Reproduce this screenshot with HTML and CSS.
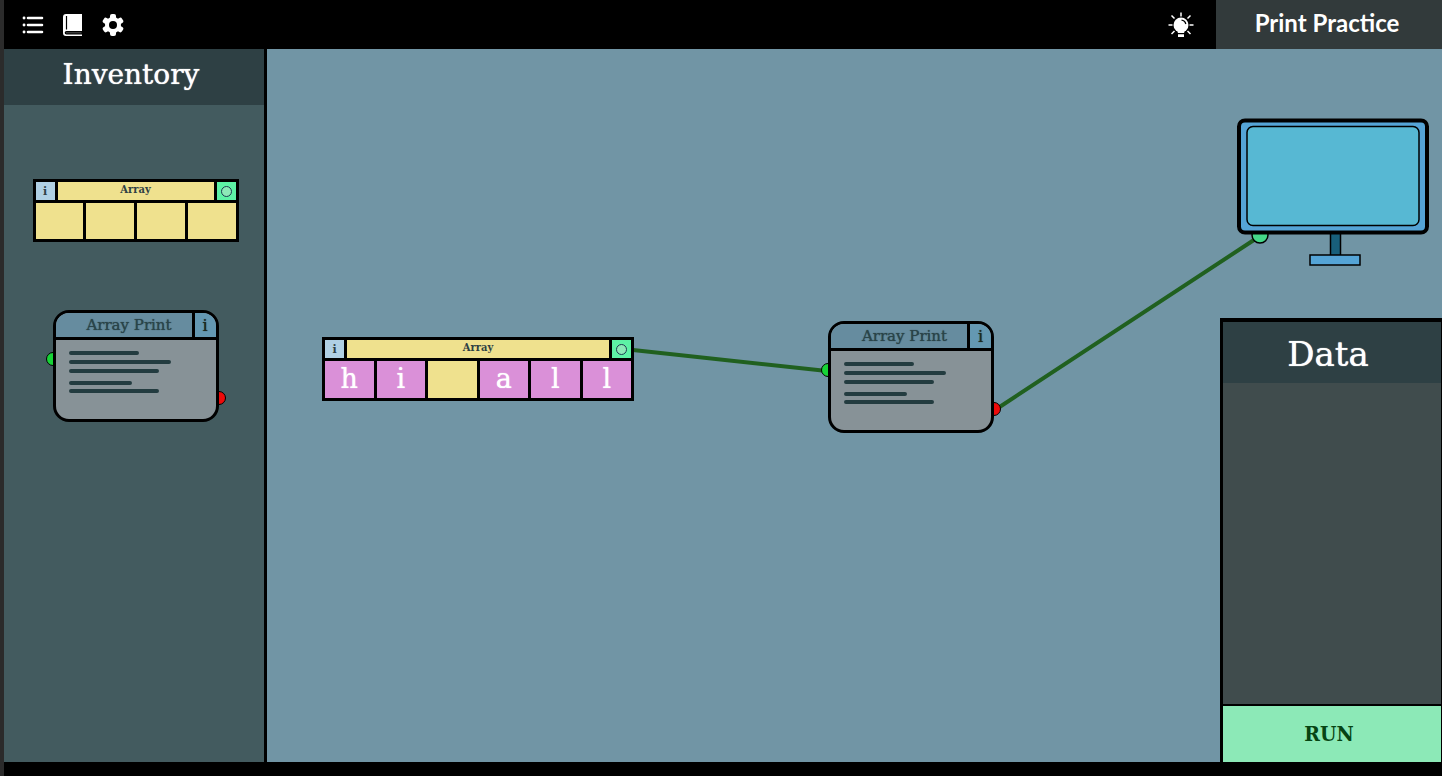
FILE: index.html
```html
<!DOCTYPE html>
<html lang="en">
<head>
<meta charset="utf-8">
<title>Print Practice</title>
<link rel="stylesheet" href="styles.css">
</head>
<body>
<div class="app">
  <header class="topbar">
    <nav class="tools">
      <button class="tool" aria-label="Levels">
        <svg width="22" height="20" viewBox="0 0 22 20" fill="none" stroke="#fff" stroke-width="3" stroke-linecap="round"><path d="M6 3H20M6 10H20M6 17H20" stroke-width="2.6"/><path d="M2 3h.1M2 10h.1M2 17h.1" stroke-width="2.8"/></svg>
      </button>
      <button class="tool" aria-label="Manual">
        <svg width="20" height="22" viewBox="0 0 20 22"><path d="M3 0H19V17H3.500a1.700 1.700 0 0 0 0 3.600H19V22H3A3 3 0 0 1 0 19V3A3 3 0 0 1 3 0Z" fill="#fff"/><path d="M3.500 2V15.500" stroke="#000" stroke-width="1.200"/><path d="M3 18.800H18.500" stroke="#555" stroke-width="1"/></svg>
      </button>
      <button class="tool" aria-label="Settings">
        <svg width="22" height="22" viewBox="0 0 22 22"><g fill="#fff"><circle cx="11" cy="11" r="8"/><g id="teeth"><rect x="8" y="0" width="6" height="22" rx="2"/><rect x="8" y="0" width="6" height="22" rx="2" transform="rotate(60 11 11)"/><rect x="8" y="0" width="6" height="22" rx="2" transform="rotate(120 11 11)"/></g></g><circle cx="11" cy="11" r="4" fill="#000"/></svg>
      </button>
    </nav>
    <button class="tool hint" aria-label="Hint">
      <svg width="26" height="26" viewBox="0 0 26 26"><g stroke="#fff" stroke-width="1.500"><path d="M13 0.500V4.500M3.500 3.500L6.500 6.500M22.500 3.500L19.500 6.500M0.500 13H4.500M21.500 13H25.500M3.500 22L6.500 19M22.500 22L19.500 19"/></g><circle cx="13" cy="13" r="7.500" fill="#fff"/><path d="M9.800 18H16.200V21H9.800ZM10 22.200H16V25H10Z" fill="#fff"/><path d="M13.500 8.200Q17 8.500 17.800 12" stroke="#000" stroke-width="1.300" fill="none"/></svg>
    </button>
    <h1 class="level">Print Practice</h1>
  </header>

  <aside class="inventory">
    <h2 class="inventory-title">Inventory</h2>
    <div class="inventory-items">
      <div class="array">
        <div class="array-head"><button class="array-info">i</button><span class="array-name">Array</span><button class="array-out" aria-label="Output"><span class="ring"></span></button></div>
        <div class="array-cells"><span class="cell"></span><span class="cell"></span><span class="cell"></span><span class="cell"></span></div>
      </div>
      <div class="printer">
        <span class="port port-in"></span><span class="port port-out"></span>
        <div class="printer-card">
          <div class="printer-head"><span class="printer-name">Array Print</span><button class="printer-info">i</button></div>
          <svg class="code" width="110" height="50" viewBox="0 0 110 50"><path d="M2 4H68M2 13H100M2 22H88M2 34H61M2 42H88"/></svg>
        </div>
      </div>
    </div>
  </aside>

  <main class="canvas">
    <svg class="wires" width="1175" height="713" viewBox="0 0 1175 713"><path d="M366 301L560 322M728 361L993 187"/></svg>
    <div class="array node node-array">
      <div class="array-head"><button class="array-info">i</button><span class="array-name">Array</span><button class="array-out" aria-label="Output"><span class="ring"></span></button></div>
      <div class="array-cells"><span class="cell filled">h</span><span class="cell filled">i</span><span class="cell"></span><span class="cell filled">a</span><span class="cell filled">l</span><span class="cell filled">l</span></div>
    </div>
    <div class="printer node node-printer">
      <span class="port port-in"></span><span class="port port-out"></span>
      <div class="printer-card">
        <div class="printer-head"><span class="printer-name">Array Print</span><button class="printer-info">i</button></div>
        <svg class="code" width="110" height="50" viewBox="0 0 110 50"><path d="M2 4H68M2 13H100M2 22H88M2 34H61M2 42H88"/></svg>
      </div>
    </div>
    <svg class="node node-monitor" width="192" height="149" viewBox="0 0 192 149" stroke="#000">
      <circle cx="23" cy="117" r="8" fill="#45d889" stroke-width="1.500"/>
      <rect x="93.500" y="112" width="10" height="26" fill="#185f7b" stroke-width="1.500"/>
      <rect x="73" y="137" width="50" height="10" fill="#55a4d6" stroke-width="1.500"/>
      <rect x="2" y="2.500" width="188" height="112" rx="6" fill="#55a4d6" stroke-width="4"/>
      <rect x="10" y="8.500" width="172" height="99" rx="6" fill="#57b8d3" stroke-width="1.500"/>
    </svg>
  </main>

  <section class="data">
    <h2 class="data-title">Data</h2>
    <div class="data-body"></div>
    <button class="run">RUN</button>
  </section>
</div>
</body>
</html>
```
FILE: styles.css
```css
* { box-sizing: border-box; }
body {
  margin: 0;
  background: #000;
  font-family: "DejaVu Serif", serif;
}
button {
  padding: 0;
  border: 0;
  background: none;
  font-family: inherit;
  color: inherit;
  cursor: pointer;
}
h1, h2 { margin: 0; font-weight: 400; }
svg { display: block; }

.app {
  display: grid;
  grid-template-columns: 263px 1fr 222px;
  grid-template-rows: 49px 269px 1fr;
  min-height: 100vh;
  padding-bottom: 14px;
  border-left: 4px solid #2b2b2b;
}

.topbar {
  grid-column: 1 / -1;
  display: flex;
  align-items: center;
  background: #000;
}
.tools { display: flex; align-items: center; gap: 19px; flex: 1; padding-left: 18px; }
.hint { margin-right: 22px; }
.level {
  align-self: stretch;
  width: 226px;
  background: #323a3b;
  color: #fff;
  font: 700 24px/45px Lato, sans-serif;
  text-align: center;
  padding-right: 4px;
}

.inventory {
  grid-column: 1;
  grid-row: 2 / 4;
  background: #435b5f;
  border-right: 3px solid #000;
}
.inventory-title {
  height: 56px;
  background: #2e4044;
  color: #fff;
  font-size: 28px;
  line-height: 52px;
  text-align: center;
  padding-right: 6px;
  text-shadow: 0 0 1px #fff;
}
.inventory-items {
  display: flex;
  flex-direction: column;
  align-items: center;
  gap: 68px;
  padding: 74px 0 0 3px;
}

.array {
  display: flex;
  flex-direction: column;
  gap: 3px;
  width: 206px;
  padding: 3px;
  background: #000;
  color: #2e4044;
}
.array-head { display: flex; gap: 3px; height: 18px; }
.array-info { width: 19px; background: #b0d0e4; font-size: 11px; font-weight: 700; }
.array-name {
  flex: 1;
  background: #efe18e;
  font-family: "DejaVu Serif Condensed", "DejaVu Serif", serif;
  font-size: 11px;
  font-weight: 700;
  line-height: 16px;
  text-align: center;
}
.array-out { display: grid; place-items: center; width: 19px; background: #5df2a5; }
.ring { width: 11px; height: 11px; border: 1px solid #1c3a50; border-radius: 50%; background: #8ce9b7; }
.array-cells { display: flex; gap: 3px; height: 36px; }
.cell { flex: 1; background: #efe18e; }
.filled {
  background: #da90d8;
  color: #fff;
  font-size: 27px;
  line-height: 36px;
  text-align: center;
  text-shadow: 0 0 1px #fff;
}

.printer { position: relative; width: 166px; }
.printer-card {
  position: relative;
  height: 112px;
  border: 3px solid #000;
  border-radius: 16px;
  background: #879297;
  overflow: hidden;
}
.printer-head { display: flex; height: 27px; border-bottom: 3px solid #000; }
.printer-name {
  flex: 1;
  padding-left: 11px;
  background: #668c9f;
  color: #2a4449;
  font-size: 15px;
  line-height: 24px;
  text-align: center;
  text-shadow: 0 0 1px #2a4449;
}
.printer-info {
  width: 24px;
  border-left: 3px solid #000;
  background: #6498b2;
  color: #1c2a20;
  font-size: 16px;
  text-shadow: 0 0 1px #1c2a20;
}
.code { margin: 9px 0 0 13px; fill: none; stroke: #233c40; stroke-width: 4; stroke-linecap: round; }
.port { position: absolute; width: 14px; height: 14px; border: 1px solid #000; border-radius: 50%; }
.port-in { left: -7px; top: 42px; background: #17d437; }
.port-out { right: -7px; top: 81px; background: #ee0a0a; }

.canvas {
  grid-column: 2 / 4;
  grid-row: 2 / 4;
  position: relative;
  overflow: hidden;
  background: #7195a5;
}
.wires { position: absolute; left: 0; top: 0; fill: none; stroke: #20601f; stroke-width: 4; }
.node { position: absolute; }
.node-array { left: 55px; top: 288px; width: 312px; }
.node-array .array-cells { height: 37px; }
.node-printer { left: 561px; top: 272px; }
.node-monitor { left: 970px; top: 69px; }

.data {
  grid-column: 3;
  grid-row: 3;
  position: relative;
  display: flex;
  flex-direction: column;
  border-top: 4px solid #000;
  border-left: 3px solid #000;
  border-right: 1px solid #000;
  background: #404c4d;
}
.data-title {
  height: 61px;
  background: #2e4044;
  color: #fff;
  font-size: 34px;
  line-height: 64px;
  text-align: center;
  padding-right: 8px;
  text-shadow: 0 0 1px #fff;
}
.data-body { flex: 1; }
.run {
  height: 58px;
  border-top: 2px solid #000;
  background: #8ce9b7;
  color: #064413;
  font-family: "DejaVu Serif Condensed", "DejaVu Serif", serif;
  font-size: 21px;
  font-weight: 700;
  padding: 0 6px 2px 0;
}
```
